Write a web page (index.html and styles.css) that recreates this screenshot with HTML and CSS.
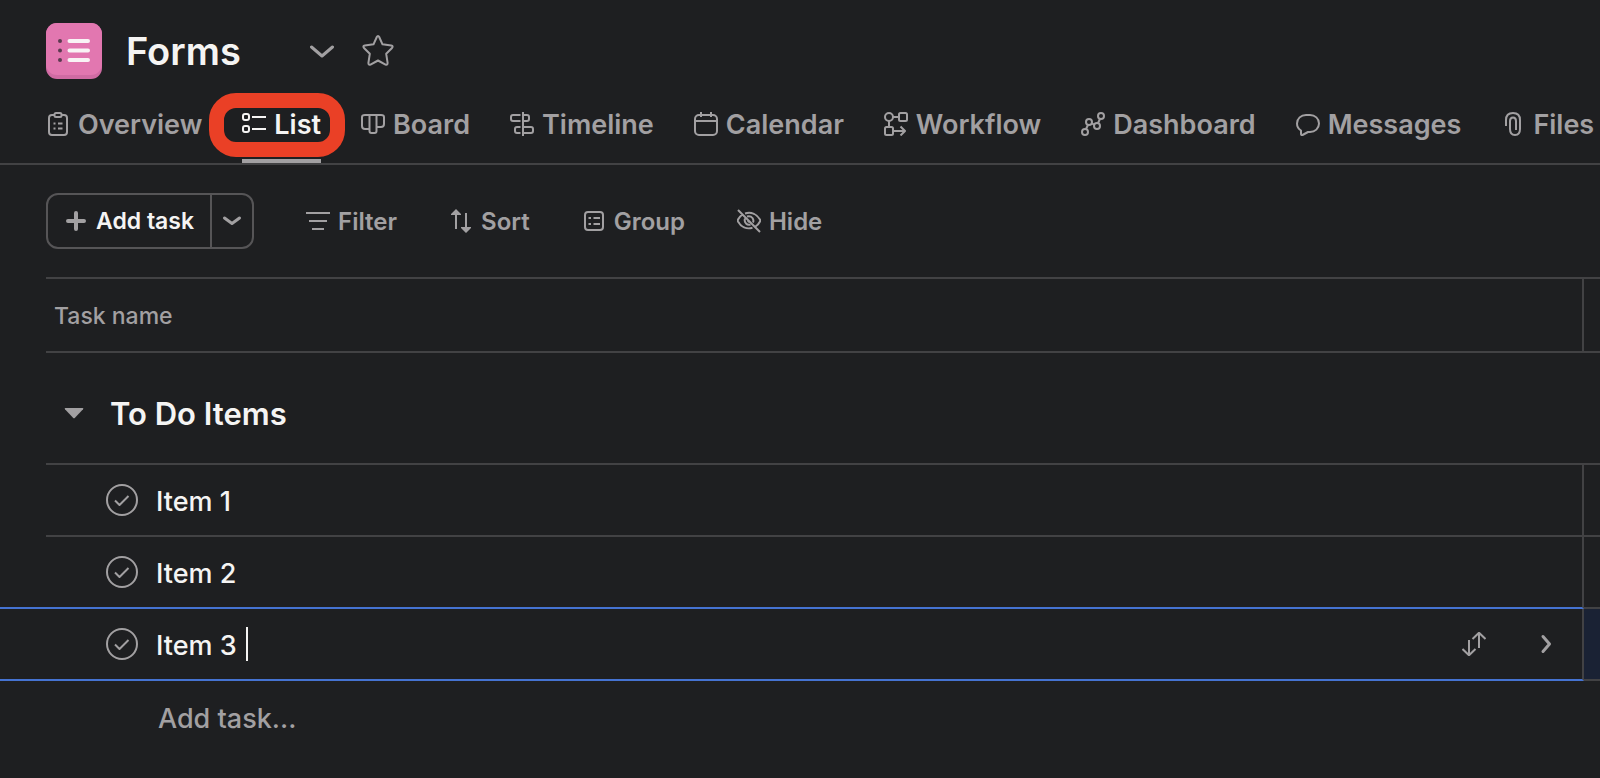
FILE: index.html
```html
<!DOCTYPE html>
<html lang="en">
<head>
<meta charset="utf-8">
<meta name="viewport" content="width=device-width, initial-scale=1">
<title>Forms</title>
<link rel="stylesheet" href="styles.css">
</head>
<body>
<header class="project-header">
  <div class="title-row">
    <svg class="project-icon" viewBox="0 0 56 56" aria-hidden="true">
      <rect class="tile-edge" width="56" height="56" rx="11"/>
      <path class="tile-face" d="M11 0H45A11 11 0 0 1 56 11V41A11 11 0 0 1 45 52H11A11 11 0 0 1 0 41V11A11 11 0 0 1 11 0Z"/>
      <g class="tile-dots"><circle cx="14" cy="18" r="2"/><circle cx="14" cy="27.500" r="2"/><circle cx="14" cy="37" r="2"/></g>
      <path class="tile-lines" d="M23.500 18H42M23.500 27.500H42M23.500 37H42"/>
    </svg>
    <h1 class="project-title">Forms</h1>
    <button class="icon-button menu-button" type="button" aria-label="Project actions">
      <svg class="icon" viewBox="0 0 24 24"><path class="bold" d="M1.500 8L12 17L22.500 8"/></svg>
    </button>
    <button class="icon-button" type="button" aria-label="Add to starred">
      <svg class="icon-large" viewBox="0 0 32 32"><path d="M16 1Q16.700 1 17.200 2L20.500 9.300L29.200 10.500Q31.600 11 30 13L24.200 18.800L25.600 27.800Q25.700 30.500 23.500 29.600L16 25.500L8.500 29.600Q6.300 30.500 6.400 27.800L7.800 18.800L2 13Q.400 11 2.800 10.500L11.500 9.300L14.800 2Q15.300 1 16 1Z"/></svg>
    </button>
  </div>
  <nav class="tabs" aria-label="Project views">
    <a class="tab" href="#overview"><svg class="icon" viewBox="0 0 24 24"><rect x="3" y="3" width="18" height="20" rx="3"/><path class="knockout" d="M8 1h8v4H8z"/><rect x="8.500" y="1" width="7" height="4" rx="1.500"/><path d="M12 11.500h4.500M12 16.500h4.500M7.500 11.500h2M7.500 16.500h2"/></svg>Overview</a>
    <a class="tab active" href="#list" aria-current="page"><svg class="icon" viewBox="0 0 24 24"><rect x="1" y="2" width="6" height="6" rx="2"/><rect x="1" y="14" width="6" height="6" rx="2"/><path d="M10 5H24M10 17H24"/></svg>List</a>
    <a class="tab" href="#board"><svg class="icon" viewBox="0 0 24 24"><path d="M8.500 3V19Q8.500 21 10.500 21H13.500Q15.500 21 15.500 19V3M8.500 17H4Q1 17 1 14V5Q1 3 4 3H20Q23 3 23 5V12Q23 15 20 15H15.500"/></svg>Board</a>
    <a class="tab" href="#timeline"><svg class="icon" viewBox="0 0 24 24"><path d="M13 0V24M10.500 3H3Q1 3 1 5V7Q1 9 3 9H10.500M13 3H17Q19 3 19 5V7Q19 9 17 9H13M10.500 15H7Q5 15 5 17V19Q5 21 7 21H10.500M13 15H21Q23 15 23 17V19Q23 21 21 21H13"/></svg>Timeline</a>
    <a class="tab" href="#calendar"><svg class="icon" viewBox="0 0 24 24"><rect x="1" y="3" width="22" height="20" rx="4"/><path d="M1 9H23M7 0V5M17 0V5"/></svg>Calendar</a>
    <a class="tab" href="#workflow"><svg class="icon" viewBox="0 0 24 24"><circle cx="5" cy="5" r="4"/><rect x="15" y="1" width="8" height="8" rx="1.500"/><rect x="1" y="15" width="8" height="8" rx="1.500"/><path d="M9 5H15M5 9V15M10 19H21M16.500 14.500L21 19L16.500 23.500"/></svg>Workflow</a>
    <a class="tab" href="#dashboard"><svg class="icon" viewBox="0 0 24 24"><circle cx="4" cy="20" r="3"/><circle cx="8" cy="10" r="3"/><circle cx="16" cy="14" r="3"/><circle cx="20" cy="4" r="3"/><path d="M5 17L7 13M10.800 11L13.200 13M17 11L19 7"/></svg>Dashboard</a>
    <a class="tab" href="#messages"><svg class="icon" viewBox="0 0 24 24"><path d="M10 3H14C19 3 23 6.500 23 11.500S19 20 14 20H12L6.500 23Q5 23.500 5 22V18.500C2.500 17 1 14.500 1 11.500C1 6.500 5 3 10 3Z"/></svg>Messages</a>
    <a class="tab" href="#files"><svg class="icon" viewBox="0 0 24 24"><path d="M5 14V8Q5 1 12 1T19 8V17Q19 23 14 23T9 17V9Q9 5.500 12 5.500T15 9V18"/></svg>Files</a>
  </nav>
</header>
<main>
  <div class="toolbar">
    <div class="split-button">
      <button class="add-button" type="button"><svg class="icon-small" viewBox="0 0 20 20"><path class="heavy" d="M10 2V18M2 10H18"/></svg>Add task</button>
      <button class="add-menu" type="button" aria-label="More add options"><svg class="icon-small" viewBox="0 0 20 20"><path class="medium" d="M2.500 7L10 12.500L17.500 7"/></svg></button>
    </div>
    <button class="tool" type="button"><svg class="icon" viewBox="0 0 24 24"><path d="M0 4H24M3 12H21M6 20H18"/></svg>Filter</button>
    <button class="tool" type="button"><svg class="icon" viewBox="0 0 24 24"><path d="M7 5V20M17 4V19"/><path class="solid" d="M7 0L12 5V6H2V5ZM17 24L12 19V18H22V19Z"/></svg>Sort</button>
    <button class="tool" type="button"><svg class="icon" viewBox="0 0 24 24"><rect x="3" y="3" width="18" height="18" rx="3"/><path d="M11.500 9H18M11.500 15H18M6.500 9H9M6.500 15H9"/></svg>Group</button>
    <button class="tool" type="button"><svg class="icon" viewBox="0 0 24 24"><path d="M1 1L23 23M8 4.500C14.500 2.500 20 5.500 23 10.500Q23.500 11.500 23 12.500Q21.500 15.500 18.500 17.500M15.500 18.800C9.500 20.500 4 18 1 12.500Q.500 11.500 1 10.500Q2.500 7.500 5.500 5.500M10 7.500Q13.500 6.500 15.500 9Q17 11.500 16 13.500M8 9.500Q7 12 9 14.500Q11 16.500 13.500 15.500M11 11Q11 13 13 13"/></svg>Hide</button>
  </div>
  <table class="task-table">
    <colgroup><col class="gutter-col"><col><col class="next-col"></colgroup>
    <thead>
      <tr class="head-row"><td></td><th class="name-cell" scope="col">Task name</th><td class="next-cell"></td></tr>
    </thead>
    <tbody>
      <tr class="section-row"><td></td><th class="section-cell" colspan="2" scope="rowgroup">
        <div class="section"><button class="icon-button" type="button" aria-label="Collapse section"><svg class="icon-small" viewBox="0 0 20 20"><path class="solid" d="M1.500 5H18.500Q20 5 19 6.200L11 14.700Q10 15.700 9 14.700L1 6.200Q0 5 1.500 5Z"/></svg></button><h2 class="section-title">To Do Items</h2></div>
      </th></tr>
      <tr class="task-row"><td></td><td class="name-cell"><div class="task">
        <button class="icon-button" type="button" aria-label="Complete Item 1"><svg class="icon-large" viewBox="0 0 32 32"><circle cx="16" cy="16" r="15"/><path d="M9 16.500L13.500 21L22.500 12"/></svg></button><span class="task-name">Item 1</span></div></td><td class="next-cell"></td></tr>
      <tr class="task-row before-selected"><td></td><td class="name-cell"><div class="task">
        <button class="icon-button" type="button" aria-label="Complete Item 2"><svg class="icon-large" viewBox="0 0 32 32"><circle cx="16" cy="16" r="15"/><path d="M9 16.500L13.500 21L22.500 12"/></svg></button><span class="task-name">Item 2</span></div></td><td class="next-cell"></td></tr>
      <tr class="task-row selected"><td></td><td class="name-cell"><div class="task">
        <button class="icon-button" type="button" aria-label="Complete Item 3"><svg class="icon-large" viewBox="0 0 32 32"><circle cx="16" cy="16" r="15"/><path d="M9 16.500L13.500 21L22.500 12"/></svg></button><input class="task-input" type="text" value="Item 3" aria-label="Task name"><span class="caret"></span>
        <div class="row-actions">
          <button class="icon-button" type="button" aria-label="Move task"><svg class="icon" viewBox="0 0 24 24"><path d="M7 8V23M.500 17L7 23.300L13.500 17M17 16V1M10.500 7L17 .800L23.500 7"/></svg></button>
          <button class="icon-button" type="button" aria-label="Open details"><svg class="icon" viewBox="0 0 24 24"><path class="bold" d="M9 4.500L15.500 12L9 19.500"/></svg></button>
        </div></div></td><td class="next-cell"></td></tr>
      <tr class="new-row"><td></td><td class="new-cell" colspan="2"><button class="new-task" type="button">Add task...</button></td></tr>
    </tbody>
  </table>
</main>
</body>
</html>
```
FILE: styles.css
```css
:root {
  --bg: #1e1f21;
  --line: #424244;
  --text: #f5f4f3;
  --muted: #a2a0a2;
  --blue: #4573d2;
}
* { box-sizing: border-box; }
body {
  margin: 0;
  min-height: 100vh;
  overflow-x: hidden;
  background: var(--bg);
  color: var(--text);
  font-family: Inter, "Liberation Sans", sans-serif;
  font-size: 27px;
}
h1, h2 { margin: 0; font-weight: 600; }
button, input {
  margin: 0;
  padding: 0;
  border: 0;
  background: none;
  color: inherit;
  font: inherit;
}
svg {
  display: block;
  flex: none;
  fill: none;
  stroke: currentColor;
  stroke-width: 2;
  stroke-linecap: butt;
  stroke-linejoin: round;
}
.icon { width: 24px; height: 24px; }
.icon-small { width: 20px; height: 20px; }
.icon-large { width: 32px; height: 32px; }
.bold { stroke-width: 3; stroke-linecap: round; }
.medium { stroke-width: 3; stroke-linecap: round; }
.heavy { stroke-width: 4; stroke-linecap: round; }
.solid { fill: currentColor; stroke: none; }
.knockout { fill: var(--bg); stroke: none; }
.icon-button { color: var(--muted); }

.project-header { padding: 23px 0 0 46px; border-bottom: 2px solid var(--line); }
.title-row { display: flex; align-items: center; height: 56px; }
.project-icon { width: 56px; height: 56px; stroke: none; }
.tile-edge { fill: #d06ba3; }
.tile-face { fill: #e277b0; }
.tile-dots { fill: #5b3a50; }
.tile-lines { stroke: #f9f3f5; stroke-width: 4; stroke-linecap: round; }
.project-title { width: 184px; margin-left: 24px; font-size: 38px; line-height: 58px; }
.menu-button { margin-right: 28px; }

.tabs { display: flex; gap: 40px; height: 78px; margin-top: 6px; font-weight: 600; }
.tab {
  position: relative;
  display: flex;
  align-items: center;
  gap: 8px;
  color: var(--muted);
  text-decoration: none;
  white-space: nowrap;
}
.tab.active { color: var(--text); border-bottom: 4px solid var(--muted); padding-top: 4px; }
.tab.active::after {
  content: "";
  position: absolute;
  inset: 8px -24px 2px -33px;
  border: 15px solid #ea4026;
  border-radius: 27px;
}

.toolbar { display: flex; align-items: center; gap: 52px; padding: 28px 46px; font-size: 24px; font-weight: 600; }
.split-button { display: flex; height: 56px; border: 2px solid #565557; border-radius: 12px; font-size: 23px; }
.add-button { display: flex; align-items: center; gap: 10px; padding: 0 16px 0 18px; }
.add-menu { width: 42px; padding: 0 10px; border-left: 2px solid #565557; color: var(--muted); }
.add-button svg { color: var(--muted); }
.tool { display: flex; align-items: center; gap: 8px; color: var(--muted); }

.task-table { width: 100%; table-layout: fixed; border-collapse: separate; border-spacing: 0; }
.task-table td, .task-table th { padding: 0; text-align: left; font-weight: 450; }
.gutter-col { width: 46px; }
.next-col { width: 16px; }
.name-cell { border-bottom: 2px solid var(--line); border-right: 2px solid var(--line); }
.next-cell { border-bottom: 2px solid var(--line); }
.head-row { height: 76px; color: var(--muted); font-size: 23px; }
.head-row .name-cell, .head-row .next-cell { border-top: 2px solid var(--line); }
.task-table .head-row .name-cell { padding: 2px 0 0 8px; }
.section-row { height: 112px; }
.section-cell { border-bottom: 2px solid var(--line); }
.section { display: flex; align-items: center; gap: 26px; padding: 10px 0 0 18px; }
.section-title { font-size: 31px; }
.task-row { height: 72px; }
.task { display: flex; align-items: center; padding-left: 60px; }
.task-name { margin-left: 18px; padding-top: 2px; }
.before-selected td:not(.next-cell), .selected td:not(.next-cell) { border-bottom: 2px solid var(--blue); }
.selected .next-cell { background: #1a2234; }
.task-input { width: 84px; height: 36px; margin-left: 18px; padding-top: 2px; outline: 0; }
.caret { width: 2px; height: 34px; margin-left: 6px; background: var(--text); }
.row-actions { display: flex; gap: 48px; margin-left: auto; padding-right: 24px; }
.new-row { height: 74px; }
.task-table .new-cell { padding-left: 112px; }
.new-task { color: var(--muted); }
```
